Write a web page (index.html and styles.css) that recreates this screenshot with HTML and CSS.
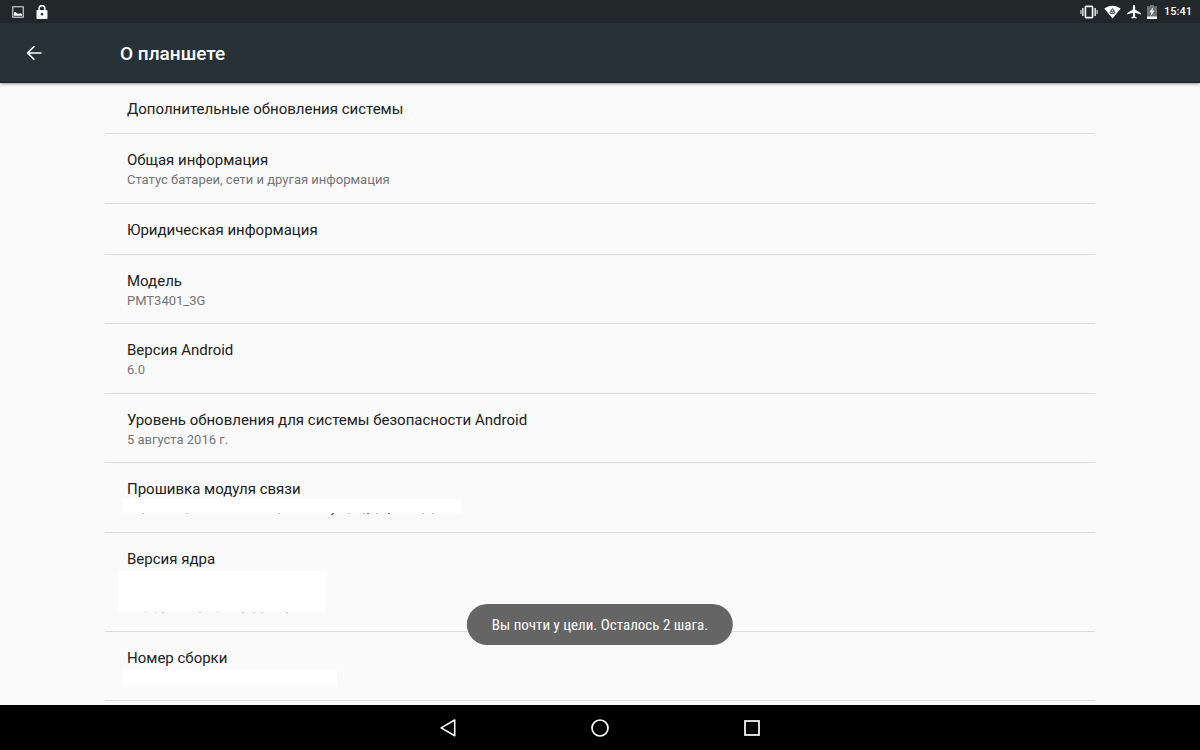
FILE: index.html
```html
<!DOCTYPE html>
<html lang="ru">
<head>
  <meta charset="UTF-8">
  <meta name="viewport" content="width=device-width, initial-scale=1.0">
  <title>О планшете</title>
  <link rel="stylesheet" href="styles.css">
</head>
<body>
  <div class="status-bar">
    <div class="status-icons status-left">
      <svg width="12" height="12" viewBox="0 0 12 12">
        <rect x="0.75" y="0.75" width="10.5" height="10.5" fill="none" stroke="#c9cbcc" stroke-width="1.2"/>
        <path d="M2 9.8V6.6l1.6-.6 1.5 1.6 1.6.2 1.6-.6L10 8v1.8z" fill="#fff"/>
      </svg>
      <svg width="12" height="14" viewBox="0 0 12 14">
        <path d="M3.1 6V3.6a2.9 2.9 0 0 1 5.8 0V6" fill="none" stroke="#fff" stroke-width="1.5"/>
        <rect x="0.5" y="5" width="11" height="9" rx="1" fill="#fff"/>
        <circle cx="6" cy="9.3" r="1.2" fill="#22272a"/>
      </svg>
    </div>
    <div class="status-icons status-right">
      <svg width="18" height="14" viewBox="0 0 18 14">
        <rect x="5.4" y="1.4" width="7.2" height="11.2" rx="0.8" fill="none" stroke="#f5f5f5" stroke-width="1.7"/>
        <path d="M2.8 3v8M15.2 3v8" stroke="#d5d7d8" stroke-width="1.6"/>
        <path d="M0.9 5v4M17.1 5v4" stroke="#b5b8b9" stroke-width="1.4"/>
      </svg>
      <svg width="17" height="14" viewBox="0 0 17 14">
        <path d="M0.3 3.6C5 -.3 12-.3 16.7 3.6L8.5 13.6z" fill="#fff"/>
        <path d="M8.5 3l1.6 1.7 1.4 3-1.4 1.5H6.9L5.5 7.7l1.4-3z" fill="#5d6367"/>
        <path d="M8.5 4.8v1.4M7.2 7.6h.9M8.9 7.6h.9" stroke="#fff" stroke-width="1"/>
      </svg>
      <svg width="14" height="14" viewBox="0 0 14 14">
        <path d="M14 9.6V8.2L8.1 4.6V1.2a1.1 1.1 0 0 0-2.2 0v3.4L0 8.2v1.4l5.9-1.8v3.6l-1.6 1.2v1L7 12.9l2.7.7v-1l-1.6-1.2V7.8z" fill="#fff"/>
      </svg>
      <svg class="battery" width="10" height="14" viewBox="0 0 10 14">
        <path d="M3 0h4v1.3h3V14H0V1.3h3z" fill="#6f7375"/>
        <path d="M0 11.5h10V14H0z" fill="#fff"/>
        <path d="M6.2 2.2L2.3 7.2h2.2l-.8 3.6 4-5H5.4z" fill="#fff"/>
      </svg>
      <span class="clock">15:41</span>
    </div>
  </div>

  <header class="toolbar">
    <button class="back-btn" type="button" aria-label="Назад">
      <svg width="16" height="16" viewBox="0 0 16 16">
        <path d="M15.5 8H2M8.4 1.2L1.6 8l6.8 6.8" fill="none" stroke="#fff" stroke-width="1.6"/>
      </svg>
    </button>
    <h1>О планшете</h1>
  </header>

  <main class="content">
    <ul class="pref-list">
      <li class="pref">
        <span class="pref-title">Дополнительные обновления системы</span>
      </li>
      <li class="pref pref-double">
        <span class="pref-title">Общая информация</span>
        <span class="pref-summary">Статус батареи, сети и другая информация</span>
      </li>
      <li class="pref">
        <span class="pref-title">Юридическая информация</span>
      </li>
      <li class="pref pref-double">
        <span class="pref-title">Модель</span>
        <span class="pref-summary">PMT3401_3G</span>
      </li>
      <li class="pref pref-double">
        <span class="pref-title">Версия Android</span>
        <span class="pref-summary">6.0</span>
      </li>
      <li class="pref pref-double">
        <span class="pref-title">Уровень обновления для системы безопасности Android</span>
        <span class="pref-summary">5 августа 2016 г.</span>
      </li>
      <li class="pref pref-double">
        <span class="pref-title">Прошивка модуля связи</span>
        <span class="blank blank-modem"></span>
        <svg width="320" height="2" viewBox="0 0 320 2">
          <path d="M15 .5h2M59 .5h2M151 .5h2M221 .5h2M236 .5h2M249 .5h2M295 .5h2M305 .5h2" stroke="#c4c4c4"/>
          <path d="M205 .5h2M204 1.5h2M240 .5h2M261 .5h2" stroke="#777"/>
        </svg>
      </li>
      <li class="pref pref-kernel">
        <span class="pref-title">Версия ядра</span>
        <span class="blank blank-kernel"></span>
        <svg width="180" height="2" viewBox="0 0 180 2">
          <path d="M18 .5h1M28 .5h1M35 .5h2M72 .5h2M90 .5h1M115 .5h2M126 .5h2M134 .5h2M159 .5h2" stroke="#c4c4c4"/>
        </svg>
      </li>
      <li class="pref pref-double">
        <span class="pref-title">Номер сборки</span>
        <span class="blank blank-build"></span>
      </li>
    </ul>
    <div class="toast" role="status">Вы почти у цели. Осталось 2 шага.</div>
  </main>

  <nav class="nav-bar">
    <button type="button" aria-label="Назад">
      <svg width="18" height="18" viewBox="0 0 18 18">
        <path d="M15.7 1v15.8L2.2 8.9z" fill="none" stroke="#fff" stroke-width="1.6" stroke-linejoin="round"/>
      </svg>
    </button>
    <button type="button" aria-label="Главный экран">
      <svg width="18" height="18" viewBox="0 0 18 18">
        <circle cx="9" cy="9" r="8" fill="none" stroke="#fff" stroke-width="1.7"/>
      </svg>
    </button>
    <button type="button" aria-label="Обзор">
      <svg width="18" height="18" viewBox="0 0 18 18">
        <rect x="2" y="2" width="14" height="14" fill="none" stroke="#fff" stroke-width="1.7"/>
      </svg>
    </button>
  </nav>
</body>
</html>
```
FILE: styles.css
```css
* {
  box-sizing: border-box;
}
body {
  margin: 0;
  height: 100vh;
  display: flex;
  flex-direction: column;
  font-family: Roboto, "Noto Sans", sans-serif;
  background-color: #fafafa;
  color: #212121;
}
button {
  display: flex;
  align-items: center;
  justify-content: center;
  padding: 0;
  border: none;
  background: none;
  cursor: pointer;
}
.status-bar {
  flex: none;
  height: 23px;
  display: flex;
  justify-content: space-between;
  align-items: center;
  padding: 0 8px 0 12px;
  background-color: #22272a;
}
.status-icons {
  display: flex;
  align-items: center;
}
.status-left {
  gap: 12px;
}
.status-right {
  gap: 6px;
}
.battery {
  margin-right: 1px;
}
.clock {
  color: #fff;
  font-size: 11px;
  font-weight: 500;
}
.toolbar {
  flex: none;
  height: 60px;
  display: flex;
  align-items: center;
  background-color: #263238;
  border-bottom: 1px solid #1b2428;
  box-shadow: 0 1px 3px rgba(0,0,0,0.4);
  z-index: 1;
}
.back-btn {
  width: 68px;
  height: 52px;
  margin-right: 52px;
}
h1 {
  margin: 0;
  padding-top: 1px;
  color: #fff;
  font-size: 19px;
  font-weight: 500;
}
.content {
  position: relative;
  flex: 1;
  min-height: 0;
  display: flex;
  overflow: hidden;
}
.pref-list {
  flex: 1;
  display: flex;
  flex-direction: column;
  margin: 0 105px;
  padding: 0 0 4px;
  list-style: none;
}
.pref {
  flex: none;
  min-height: 51px;
  display: flex;
  flex-direction: column;
  align-items: flex-start;
  padding: 16px 22px 0;
  border-bottom: 1px solid #dcdcdc;
}
.pref-double {
  flex: 1 0 69px;
}
.pref-kernel {
  min-height: 99px;
}
.pref-title {
  font-size: 15px;
  line-height: 20px;
}
.pref-summary {
  font-size: 13px;
  line-height: 20px;
  color: #757575;
}
/* values hidden by their owner */
.blank {
  background-color: #fff;
  margin-left: -5px;
}
.blank-modem {
  width: 339px;
  height: 14px;
}
.blank-kernel {
  width: 209px;
  height: 41px;
  margin-top: 2px;
  margin-left: -9px;
}
.blank-build {
  width: 215px;
  height: 17px;
  margin-top: 2px;
}
.toast {
  position: absolute;
  left: 50%;
  bottom: 60px;
  transform: translateX(-50%);
  padding: 11px 25px 9px;
  border-radius: 21px;
  background-color: #656565;
  color: #fff;
  font-family: "Roboto Condensed", Roboto, sans-serif;
  font-size: 15px;
  line-height: 21px;
  white-space: nowrap;
}
.nav-bar {
  flex: none;
  height: 45px;
  display: flex;
  justify-content: center;
  align-items: center;
  background-color: #000;
}
.nav-bar button {
  width: 152px;
  height: 45px;
}
```
